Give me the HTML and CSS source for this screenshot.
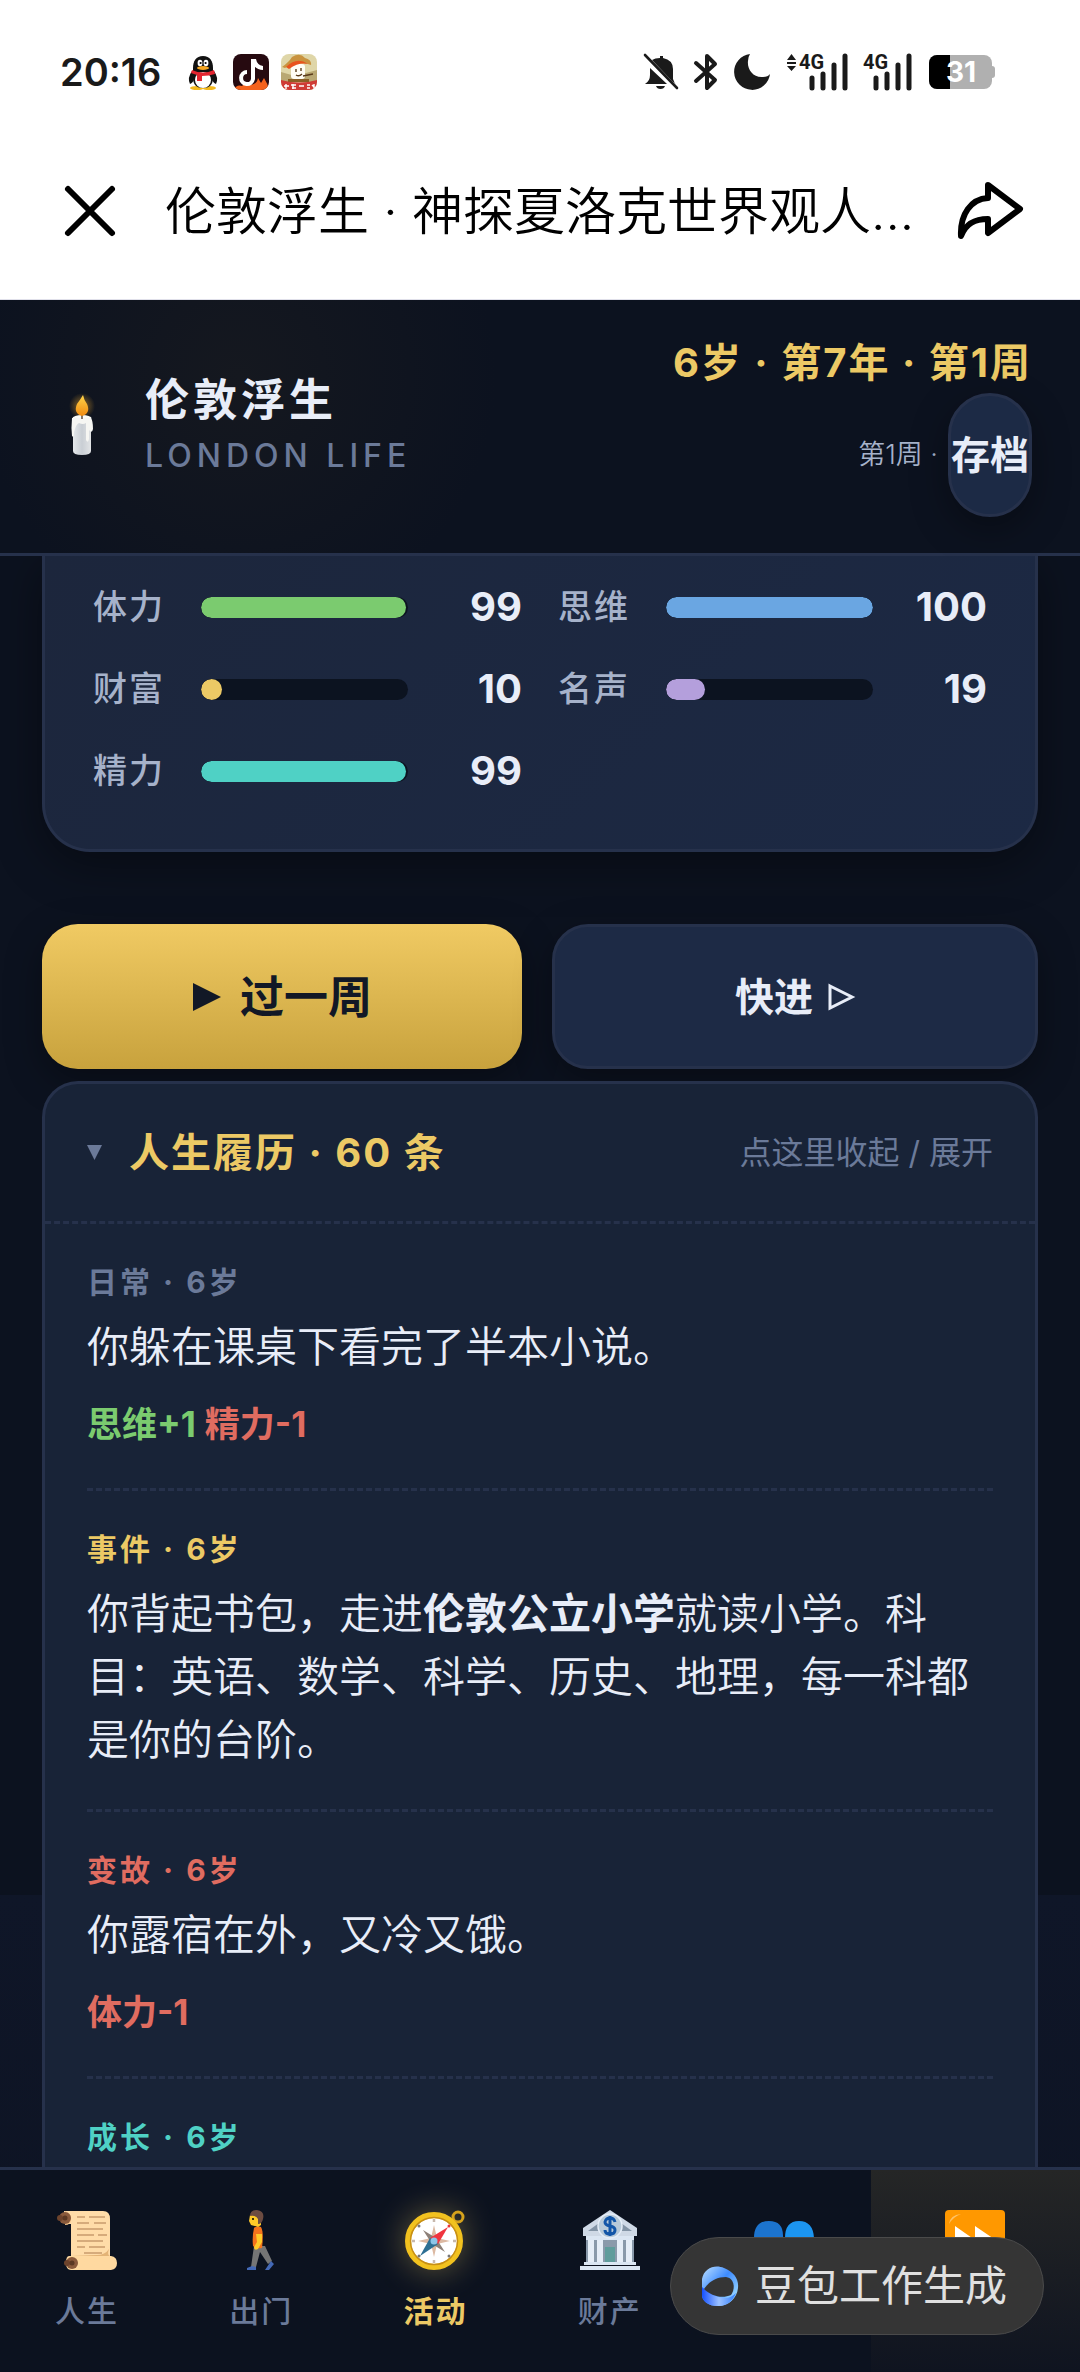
FILE: index.html
```html
<!DOCTYPE html>
<html lang="zh-CN">
<head>
<meta charset="utf-8">
<meta name="viewport" content="width=device-width, initial-scale=1">
<title>伦敦浮生</title>
<link rel="stylesheet" href="styles.css">
</head>
<body>
<div class="screen">
  <div class="status">
    <div class="status-left">
      <span class="clock">20:16</span>
      <svg class="app-icon" viewBox="0 0 36 36" aria-hidden="true">
        <ellipse cx="12" cy="34" rx="7" ry="2" fill="#f3b81c"/><ellipse cx="24" cy="34" rx="7" ry="2" fill="#f3b81c"/>
        <path d="M7 17Q2 24 5 30Q8 29 9 25H27Q28 29 31 30Q34 24 29 17Z" fill="#111"/>
        <path d="M18 2C11 2 8 7 8 14V24C8 31 12 34 18 34S28 31 28 24V14C28 7 25 2 18 2Z" fill="#111"/>
        <ellipse cx="18" cy="26" rx="8" ry="8" fill="#fff"/>
        <path d="M7 16Q18 21 29 16L30 20Q24 22 17 22V27H12V21L6 19Z" fill="#e3242f"/>
        <ellipse cx="15" cy="9" rx="2.4" ry="3.2" fill="#fff"/><ellipse cx="21" cy="9" rx="2.4" ry="3.2" fill="#fff"/>
        <circle cx="15.6" cy="9" r="1.1"/><circle cx="20.6" cy="9" r="1.1"/>
        <ellipse cx="18" cy="14" rx="6" ry="1.9" fill="#f5a623"/>
      </svg>
      <svg class="app-icon" viewBox="0 0 36 36" aria-hidden="true">
        <defs><clipPath id="tile"><rect width="36" height="36" rx="8"/></clipPath></defs>
        <g clip-path="url(#tile)">
          <rect width="36" height="36" fill="#260a10"/>
          <path d="M0 36Q4 30 9 32Q13 27 18 31Q24 30 25 24L28 29L31 24Q35 30 36 36Z" fill="#f4621d"/>
          <path d="M20 5V25A6 6 0 1 1 14 18" fill="none" stroke="#fff" stroke-width="4"/>
          <path d="M19 5H23Q24 11 30 12V16Q25 16 21 12Z" fill="#fff"/>
        </g>
      </svg>
      <svg class="app-icon" viewBox="0 0 36 36" aria-hidden="true">
        <g clip-path="url(#tile)">
          <rect width="36" height="36" fill="#dfd6a8"/>
          <path d="M0 18L14 22L36 16V28H0Z" fill="#b9a873"/>
          <rect x="10" y="10" width="14" height="15" rx="3" fill="#fffdf5"/>
          <path d="M1 13Q8 8 11 3Q19 -2 24 4Q31 6 30 11Q18 6 4 14Z" fill="#c9933f"/>
          <path d="M5 13Q16 2 27 10Q18 8 8 15Z" fill="#e9531c"/>
          <path d="M15 15v3M20 14v3M15 21q3 2 6-1M22 22L32 20" stroke="#5a3b1a" stroke-width="1.4" fill="none"/>
          <path d="M7 25H28V28H7Z" fill="#8a5f25"/>
          <path d="M0 26Q18 31 36 26V36H0Z" fill="#cf3b35"/>
          <path d="M3 32h5M5 30v5M10 31h5M11 34h4M12 30v5M18 32h5M26 31h3M26 34h3M31 31l3 3M33 30v5" stroke="#fff" stroke-width="1.4"/>
        </g>
      </svg>
    </div>
    <div class="status-right">
      <svg class="sys sys-bell" viewBox="0 0 36 36" aria-hidden="true">
        <path d="M9 6L29 27L34 31Q31 29 30 25V15Q30 6 20 4V2H17V4Q12 4 9 6Z M7 14L24 30H2Q7 27 7 21Z M13 32H22Q21 35 17.500 35T13 32Z" fill="#1a1a1a"/>
        <path d="M2 1L34 34" stroke="#1a1a1a" stroke-width="2.6" stroke-linecap="round"/>
      </svg>
      <svg class="sys sys-bt" viewBox="0 0 24 38" aria-hidden="true"><path d="M2 10L21 27L13 35V3L21 11L2 28" fill="none" stroke="#1a1a1a" stroke-width="4" stroke-linejoin="round" stroke-linecap="round"/></svg>
      <svg class="sys sys-moon" viewBox="0 0 38 38" aria-hidden="true"><path d="M17 1A18 18 0 1 0 37 21Q35 24 30 24C20 25 14 16 15 8Q15 4 17 1Z" fill="#1a1a1a"/></svg>
      <svg class="sys sys-data" viewBox="0 0 62 38" aria-hidden="true">
        <path d="M1 7L5.500 1L10 7Z M1 9H10V11H1Z M1 13L5.500 18L10 13Z" fill="#1a1a1a"/>
        <text x="13" y="16" class="net">4G</text>
        <path d="M26 25V35M37 21V35M48 12V35M59 3V35" stroke="#1a1a1a" stroke-width="5" stroke-linecap="round"/>
      </svg>
      <svg class="sys sys-net" viewBox="0 0 50 38" aria-hidden="true">
        <text x="0" y="16" class="net">4G</text>
        <path d="M13 25V35M24 21V35M35 12V35M46 3V35" stroke="#1a1a1a" stroke-width="5" stroke-linecap="round"/>
      </svg>
      <svg class="sys sys-batt" viewBox="0 0 68 36" role="img" aria-label="电量 31%">
        <rect x="1" y="1" width="63" height="34" rx="8" fill="#b0b0b0"/><path d="M9 1H22V35H9A8 8 0 0 1 1 27V9A8 8 0 0 1 9 1Z"/>
        <path d="M64 12Q67 12 67 15V21Q67 24 64 24Z" fill="#b0b0b0"/>
        <text x="33" y="28" text-anchor="middle" class="level">31</text>
      </svg>
    </div>
  </div>

  <div class="titlebar">
    <button class="icon-btn" aria-label="关闭"><svg width="54" height="54" viewBox="0 0 54 54"><path d="M5 5L49 49M49 5L5 49" stroke="#000" stroke-width="6" stroke-linecap="round"/></svg></button>
    <h1 class="page-title">伦敦浮生 · 神探夏洛克世界观人...</h1>
    <button class="icon-btn" aria-label="分享"><svg width="70" height="64" viewBox="0 0 70 64"><path d="M33 6L65 30L33 54V40C20 40 11 44 6 57C5 35 16 20 33 19Z" fill="none" stroke="#000" stroke-width="6" stroke-linejoin="round"/></svg></button>
  </div>

  <div class="app">
    <header class="app-header">
      <svg class="candle" viewBox="0 0 24 62" aria-hidden="true">
        <defs>
          <radialGradient id="glow"><stop offset="0" stop-color="#ffb52e" stop-opacity=".55"/><stop offset="1" stop-color="#ffb52e" stop-opacity="0"/></radialGradient>
          <linearGradient id="wax"><stop offset="0" stop-color="#e6e9ec"/><stop offset=".5" stop-color="#c9ced4"/><stop offset="1" stop-color="#e2e4e6"/></linearGradient>
          <linearGradient id="flame" x2="0" y2="1"><stop offset="0" stop-color="#ffd54a"/><stop offset="1" stop-color="#f08a10"/></linearGradient>
        </defs>
        <circle cx="12" cy="12" r="13" fill="url(#glow)"/>
        <path d="M3 24V57Q3 61 12 61T21 57V24Z" fill="url(#wax)"/>
        <ellipse cx="12" cy="24" rx="9.500" ry="3" fill="#fbfbf6"/>
        <path d="M2 24Q1 34 2 42Q4 44 4 38Q6 30 9 29Q13 31 16 29V46Q18 50 19 45V36Q22 40 23 35Q23 27 21 24Z" fill="#f6f6f3"/>
        <path d="M12 17V25" stroke="#5b4a3a" stroke-width="1.500"/>
        <path d="M13 1Q10 6 7 10Q3 19 12 22Q21 19 17 10Q14 6 13 1Z" fill="url(#flame)"/>
      </svg>
      <div class="brand">
        <h2 class="brand-name">伦敦浮生</h2>
        <p class="brand-sub">LONDON LIFE</p>
      </div>
      <div class="calendar">
        <p class="age">6岁 · 第7年 · 第1周</p>
        <div class="save-row"><span class="week">第1周 ·</span><button class="save">存档</button></div>
      </div>
    </header>

    <main class="content">
      <section class="stats" aria-label="属性">
        <div class="stat"><span class="stat-name">体力</span><span class="track"><span class="fill green" style="width:99%"></span></span><span class="stat-value">99</span></div>
        <div class="stat"><span class="stat-name">思维</span><span class="track"><span class="fill blue" style="width:100%"></span></span><span class="stat-value">100</span></div>
        <div class="stat"><span class="stat-name">财富</span><span class="track"><span class="fill gold" style="width:10%"></span></span><span class="stat-value">10</span></div>
        <div class="stat"><span class="stat-name">名声</span><span class="track"><span class="fill purple" style="width:19%"></span></span><span class="stat-value">19</span></div>
        <div class="stat"><span class="stat-name">精力</span><span class="track"><span class="fill teal" style="width:99%"></span></span><span class="stat-value">99</span></div>
      </section>

      <div class="actions">
        <button class="btn btn-gold"><svg width="30" height="30" viewBox="0 0 30 30" aria-hidden="true"><path d="M1 1L29 15L1 29Z" fill="#121826"/></svg>过一周</button>
        <button class="btn btn-dark">快进<svg width="28" height="28" viewBox="0 0 28 28" aria-hidden="true"><path d="M3 3L25 14L3 25Z" fill="none" stroke="#e8edf8" stroke-width="3"/></svg></button>
      </div>

      <section class="log">
        <button class="log-head" aria-expanded="true">
          <svg width="15" height="15" viewBox="0 0 15 15" aria-hidden="true"><path d="M0 0H15L7.500 15Z" fill="#6b7a99"/></svg>
          <span class="log-title">人生履历 · 60 条</span>
          <span class="log-hint">点这里收起 / 展开</span>
        </button>
        <div class="entries">
          <article class="entry">
            <p class="tag">日常 · 6岁</p>
            <p class="story">你躲在课桌下看完了半本小说。</p>
            <p class="delta"><span class="up">思维+1</span><span class="down">精力-1</span></p>
          </article>
          <article class="entry">
            <p class="tag tag-gold">事件 · 6岁</p>
            <p class="story">你背起书包，走进<strong>伦敦公立小学</strong>就读小学。科目：英语、数学、科学、历史、地理，每一科都是你的台阶。</p>
          </article>
          <article class="entry">
            <p class="tag tag-red">变故 · 6岁</p>
            <p class="story">你露宿在外，又冷又饿。</p>
            <p class="delta"><span class="down">体力-1</span></p>
          </article>
          <article class="entry">
            <p class="tag tag-teal">成长 · 6岁</p>
          </article>
        </div>
      </section>
    </main>

    <nav class="tabs">
      <button class="tab">
        <svg class="tab-icon" viewBox="0 0 60 60" aria-hidden="true">
          <path d="M7 1H46Q53 1 53 9V50H14V14H8Z" fill="#ffdca8"/>
          <path d="M8 1Q14 3 14 9T8 15" fill="#f0bf87"/>
          <path d="M12 46H54Q60 47 60 53T54 60H14Q9 60 9 53T12 46Z" fill="#ffd9a0"/>
          <path d="M14 46H53Q50 45 52 39Q48 45 40 45Z" fill="#e3b376"/>
          <circle cx="8" cy="8" r="6" fill="#8a5a3c"/><circle cx="3" cy="8" r="3" fill="#6d432c"/><circle cx="8" cy="8" r="2.500" fill="#5b3823"/>
          <circle cx="15" cy="53" r="6" fill="#8a5a3c"/><circle cx="10" cy="53" r="3" fill="#6d432c"/><circle cx="15" cy="53" r="2.500" fill="#5b3823"/>
          <path d="M20 7h8M32 7h16M20 13h12M37 13h12M20 19h26M20 25h17M41 25h9M20 31h26M20 37h8M32 37h16M27 43h18" stroke="#c99b6c" stroke-width="1.600"/>
        </svg>
        <span class="tab-label">人生</span>
      </button>
      <button class="tab">
        <svg class="tab-icon" viewBox="0 0 60 60" aria-hidden="true">
          <path d="M23 36L20 57H25L29 42L37 54L41 51L34 36Z" fill="#757575"/>
          <path d="M16 60V58L21 56L25 57V60Z M34 60L40 51L43 54L38 60Z" fill="#4368b5"/>
          <path d="M23 18Q26 15 30 17Q33 22 31 38Q25 39 22 36Q21 27 23 18Z" fill="#f4731c"/>
          <path d="M25 24H31V32L27 39Q23 41 23 37L26 32Z" fill="#ffca28"/>
          <path d="M19 5H30V15L27 17Q24 16 20 15L18 11Z" fill="#ffca28"/>
          <path d="M19 6Q19 0 26 0Q34 1 32 9Q31 14 27 14V9Q25 5 19 6Z" fill="#6d4c41"/>
          <circle cx="22" cy="9" r="1"/>
        </svg>
        <span class="tab-label">出门</span>
      </button>
      <button class="tab tab-active">
        <svg class="tab-icon" viewBox="0 0 60 60" aria-hidden="true">
          <circle cx="53" cy="7" r="5" fill="none" stroke="#d6a21c" stroke-width="3"/>
          <circle cx="29" cy="31" r="26" fill="#fff" stroke="#f2c21f" stroke-width="6"/>
          <circle cx="29" cy="31" r="23.500" fill="none" stroke="#c78f16" stroke-width="1.500"/>
          <path d="M29 15L32 28L45 31L32 34L29 47L26 34L13 31L26 28Z" fill="#dcb9a2"/>
          <path d="M18 20L31 28L40 42L27 34Z" fill="#8d8078"/>
          <path d="M43 17L33 34L25 28Z" fill="#f0353f"/><path d="M15 46L25 28L33 34Z" fill="#2d6f93"/>
          <circle cx="29" cy="31" r="3.500" fill="#8cc5e8"/>
          <path d="M29 9v3M29 50v3M7 31h3M48 31h3" stroke="#c7b8ad" stroke-width="2.500"/>
          <circle cx="14" cy="16" r="1.500" fill="#777"/><circle cx="44" cy="46" r="1.500" fill="#777"/><circle cx="14" cy="46" r="1.500" fill="#777"/><circle cx="44" cy="16" r="1.500" fill="#e33"/>
        </svg>
        <span class="tab-label">活动</span>
      </button>
      <button class="tab">
        <svg class="tab-icon" viewBox="0 0 60 60" aria-hidden="true">
          <path d="M30 0L57 18V26H3V18Z" fill="#cfd9e6"/><path d="M30 5L52 21H8Z" fill="#8394a6"/>
          <path d="M6 27H54V52H6Z" fill="#8a9aab"/><path d="M25 37H35V52H25Z" fill="#5f9c9c"/>
          <path d="M8 30H14V52H8Z M17 30H23V52H17Z M37 30H43V52H37Z M46 30H52V52H46Z" fill="#e6eef8"/>
          <path d="M6 26H54V30H6Z M4 52H56V55H4Z M0 56H60V60H0Z" fill="#dbe6f3"/>
          <circle cx="30" cy="16" r="12" fill="#b8cad9" stroke="#e6eef8" stroke-width="1.500"/>
          <path d="M35 12Q34 8 30 8T25 12Q25 15 30 16T35 20Q35 24 30 24T25 20M30 6V26" fill="none" stroke="#1356a8" stroke-width="3"/>
        </svg>
        <span class="tab-label">财产</span>
      </button>
      <button class="tab" aria-label="人脉">
        <svg class="tab-icon" viewBox="0 0 60 60" aria-hidden="true">
          <path d="M0 28Q0 11 15 11T29 28Q29 39 15 39T0 28Z M0 60Q0 43 15 43T29 60Z" fill="#1c74cf"/>
          <path d="M31 28Q31 11 45 11T60 28Q60 39 45 39T31 28Z M31 60Q31 43 45 43T60 60Z" fill="#1c95f0"/>
        </svg>
      </button>
      <button class="tab tab-skip" aria-label="快进">
        <svg class="tab-icon" viewBox="0 0 60 60" aria-hidden="true">
          <rect width="60" height="60" rx="4" fill="#ff9800"/><path d="M4 14Q5 5 16 4Q8 7 4 14Z" fill="#ffc266"/>
          <path d="M10 16L30 30V16L52 31L30 46V32L10 46Z" fill="#fff"/>
        </svg>
      </button>
      <div class="badge">
        <svg width="38" height="42" viewBox="0 0 38 42" aria-hidden="true">
          <defs>
            <linearGradient id="ba" x1="0" y1="0" x2="1" y2="1"><stop offset="0" stop-color="#bfe2ff"/><stop offset=".45" stop-color="#3d8bff"/><stop offset="1" stop-color="#bdf4ff"/></linearGradient>
            <linearGradient id="bb" x1="0" y1="0" x2="1" y2="0"><stop offset="0" stop-color="#1550ff"/><stop offset=".5" stop-color="#9cc2ff"/><stop offset="1" stop-color="#2f7dff"/></linearGradient>
          </defs>
          <path d="M1 30V14C3 3 14 -1 23 3C33 7 38 14 37 23C36 33 28 41 17 41C7 41 1 36 1 30Z" fill="url(#ba)"/>
          <path d="M1 22Q12 33 24 33Q30 33 35 28Q30 41 17 41C7 41 1 36 1 30Z" fill="url(#bb)"/>
          <path d="M3 24C9 15 17 12 25 12C33 13 35 23 30 30C21 34 10 31 3 24Z" fill="#353535"/>
        </svg>
        <span>豆包工作生成</span>
      </div>
    </nav>
  </div>
</div>
</body>
</html>
```
FILE: styles.css
```css
:root {
  --ink: #e8edf8;
  --muted: #6b7a99;
  --soft: #a6b2ca;
  --gold: #ecc965;
  --red: #e06c60;
  --green: #7bcb6f;
  --teal: #4fd1c5;
  --line: #26314b;
  --night: #0c121f;
}

* { box-sizing: border-box; }
body, h1, h2, p { margin: 0; }

body {
  font-family: Inter, "Noto Sans CJK SC", sans-serif;
  background: var(--night);
  color: var(--ink);
}

button {
  font: inherit;
  color: inherit;
  background: none;
  border: 0;
  padding: 0;
}

svg { display: block; flex: none; overflow: visible; }

.screen {
  height: 100vh;
  display: flex;
  flex-direction: column;
}

/* system bars */
.status {
  flex: none;
  height: 144px;
  padding: 0 84px 0 60px;
  background: #fff;
  color: #1a1a1a;
  display: flex;
  align-items: center;
  justify-content: space-between;
}
.status-left { display: flex; align-items: center; gap: 12px; }
.clock { font-size: 38px; line-height: 48px; font-weight: 600; margin-right: 12px; }
.app-icon { width: 36px; height: 36px; }
.status-right { display: flex; align-items: center; gap: 15px; }
.sys { height: 38px; }
.sys-bell { width: 36px; height: 36px; }
.sys-bt { width: 24px; }
.sys-moon { width: 38px; }
.sys-data { width: 62px; }
.sys-net { width: 50px; }
.sys-batt { width: 68px; height: 36px; }
.net { font: 700 20px Roboto, sans-serif; fill: #1a1a1a; }
.level { font: 700 28px Inter, sans-serif; fill: #fff; }

.titlebar {
  flex: none;
  height: 156px;
  padding: 0 55px 22px 63px;
  background: #fff;
  color: #000;
  border-bottom: 1px solid #e0e0ea;
  display: flex;
  align-items: center;
}
.page-title {
  flex: 1;
  min-width: 0;
  margin: 2px 32px 0 48px;
  font-size: 51px;
  line-height: 66px;
  font-weight: 350;
  white-space: nowrap;
}

/* game shell */
.app {
  flex: 1;
  min-height: 0;
  display: flex;
  flex-direction: column;
  background: linear-gradient(#0c121f 0 77%, #0f1628 77%, #0d1322);
}

.app-header {
  flex: none;
  height: 256px;
  padding: 0 48px 3px 42px;
  border-bottom: 3px solid var(--line);
  background: radial-gradient(circle at 22% 30%, #15181f, #0c121f 30%);
  display: flex;
  align-items: center;
}
.candle { width: 24px; height: 62px; margin: 0 51px 0 28px; }
.brand { flex: 1; }
.brand-name { font-size: 44px; line-height: 62px; font-weight: 700; letter-spacing: 4px; }
.brand-sub { font-size: 32px; line-height: 50px; font-weight: 500; letter-spacing: 5px; color: var(--muted); }
.age { font-size: 40px; line-height: 60px; font-weight: 700; letter-spacing: 2px; color: var(--gold); }
.save-row { display: flex; align-items: center; justify-content: flex-end; gap: 10px; }
.week { font-size: 27px; line-height: 36px; font-weight: 350; color: var(--soft); }
.save {
  height: 124px;
  border: 3px solid var(--line);
  border-radius: 42px;
  background: #1c2a45;
  box-shadow: 0 12px 36px rgba(0, 0, 0, .35);
  font-size: 39px;
  line-height: 48px;
  font-weight: 700;
}

.content {
  flex: 1;
  min-height: 0;
  overflow: hidden;
  padding: 0 42px;
  display: flex;
  flex-direction: column;
}

.stats {
  flex: none;
  margin-bottom: 72px;
  padding: 27px 48px 54px;
  border: 3px solid var(--line);
  border-top: 0;
  border-radius: 0 0 48px 48px;
  background: linear-gradient(135deg, #1c263c, #1c2944);
  box-shadow: 0 12px 48px rgba(0, 0, 0, .4);
  display: grid;
  grid-template-columns: 1fr 1fr;
  gap: 34px 36px;
}
.stat {
  display: grid;
  grid-template-columns: 84px 1fr 90px;
  column-gap: 24px;
  align-items: center;
}
.stat-name { font-size: 34px; line-height: 48px; font-weight: 500; letter-spacing: 2px; color: var(--soft); }
.track { height: 21px; border-radius: 11px; background: #0c1320; overflow: hidden; }
.fill { display: block; height: 21px; border-radius: 11px; }
.green { background: var(--green); }
.blue { background: #6aa6e2; }
.gold { background: var(--gold); }
.purple { background: #b49fdc; }
.teal { background: var(--teal); }
.stat-value { font-size: 40px; line-height: 48px; font-weight: 700; text-align: right; }

.actions { flex: none; display: flex; gap: 30px; margin-bottom: 12px; }
.btn {
  box-sizing: content-box;
  flex: 1;
  height: 145px;
  border-radius: 36px;
  display: flex;
  align-items: center;
  justify-content: center;
  box-shadow: 0 12px 36px rgba(0, 0, 0, .35);
  line-height: 60px;
  font-weight: 700;
}
.btn-gold {
  gap: 18px;
  background: linear-gradient(#f0ca63, #c8a23d);
  color: #121826;
  font-size: 44px;
}
.btn-dark {
  gap: 14px;
  height: 139px;
  border: 3px solid var(--line);
  background: #1d2a45;
  font-size: 39px;
}

.log {
  flex: 1 0 auto;
  border: 3px solid var(--line);
  border-bottom: 0;
  border-radius: 36px 36px 0 0;
  background: #182337;
}
.log-head {
  width: 100%;
  height: 140px;
  padding: 0 42px;
  border-bottom: 3px dashed var(--line);
  display: flex;
  align-items: center;
  line-height: 48px;
}
.log-title {
  flex: 1;
  margin-left: 27px;
  text-align: left;
  font-size: 40px;
  font-weight: 700;
  letter-spacing: 2px;
  color: var(--gold);
}
.log-hint { font-size: 32px; color: var(--muted); }
.entries { padding: 0 42px; }
.entry { padding: 37px 0 38px; border-bottom: 3px dashed var(--line); }
.entry:last-child { border-bottom: 0; }
.tag { font-size: 30px; line-height: 42px; font-weight: 700; letter-spacing: 3px; color: var(--muted); }
.tag-gold { color: var(--gold); }
.tag-red { color: var(--red); }
.tag-teal { color: var(--teal); }
.story { margin-top: 12px; font-size: 42px; line-height: 63px; font-weight: 350; }
.story strong { font-weight: 700; }
.delta { margin-top: 20px; display: flex; gap: 9px; font-size: 35px; line-height: 52px; font-weight: 700; }
.up { color: var(--green); }
.down { color: var(--red); }

/* bottom tabs */
.tabs {
  flex: none;
  position: relative;
  height: 205px;
  border-top: 3px solid var(--line);
  background: var(--night);
  display: grid;
  grid-template-columns: repeat(5, 5fr) 6fr;
}
.tab {
  padding-top: 40px;
  display: flex;
  flex-direction: column;
  align-items: center;
  gap: 19px;
  color: var(--muted);
}
.tab-icon { width: 60px; height: 60px; }
.tab-label { font-size: 30px; line-height: 44px; font-weight: 500; letter-spacing: 2px; }
.tab-active { color: var(--gold); }
.tab-active .tab-label { font-weight: 700; }
.tab-active .tab-icon { filter: drop-shadow(0 0 16px rgba(236, 201, 101, .4)); }
.tab-skip { background: linear-gradient(#252626, #0f1420); }

.badge {
  position: absolute;
  right: 36px;
  bottom: 37px;
  height: 98px;
  padding: 0 36px 0 30px;
  border: 1px solid #4a4a4a;
  border-radius: 49px;
  background: #353535;
  color: #e0e0e0;
  display: flex;
  align-items: center;
  gap: 16px;
  font-size: 42px;
  line-height: 60px;
  white-space: nowrap;
}
```
